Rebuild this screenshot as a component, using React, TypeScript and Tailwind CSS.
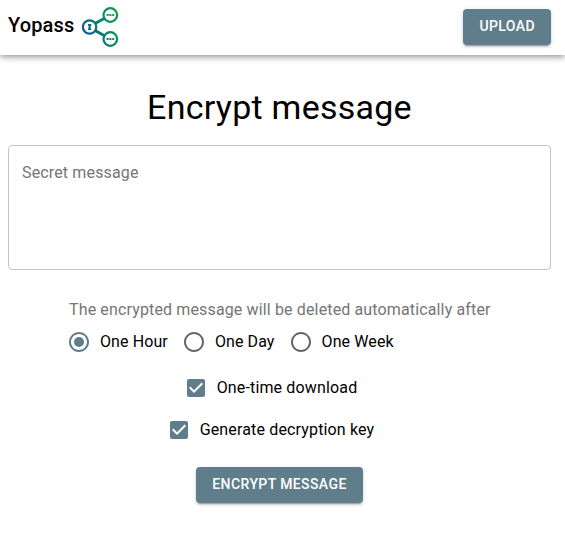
import React from 'react';

function Logo() {
  return (
    <svg className="mb-0.5" width="38" height="42" viewBox="0 0 38 42" fill="none">
      <defs>
        <linearGradient id="brand" x1="0" y1="30" x2="34" y2="12" gradientUnits="userSpaceOnUse">
          <stop stopColor="#0b4c9c" />
          <stop offset="0.5" stopColor="#087c70" />
          <stop offset="1" stopColor="#0a9a4c" />
        </linearGradient>
      </defs>
      <g stroke="url(#brand)" strokeWidth="2.2">
        <path d="M14 18.6 23.2 13.4M14 25.4 23.2 30.6" strokeWidth="2.9" />
        <circle cx="8.6" cy="22" r="6.7" />
        <circle cx="29.3" cy="10" r="6.8" />
        <circle cx="29.3" cy="34" r="6.8" />
      </g>
      <g fill="url(#brand)">
        <path d="M7 19h3.2v1.8H9.7v2.6h.5V25H7v-1.6h.6v-2.6H7z" />
        <path d="M25.6 9h2v2h-2zM28.4 9h2v2h-2zM31.2 9h2v2h-2z" />
        <path d="M25.6 33h2v2h-2zM28.4 33h2v2h-2zM31.2 33h2v2h-2z" />
      </g>
    </svg>
  );
}

function Radio({ label, checked = false }: { label: string; checked?: boolean }) {
  return (
    <label className="mr-3.5 flex items-center">
      <svg className={checked ? 'text-[#607d8b]' : 'text-[#666666]'} width="24" height="24" viewBox="0 0 24 24" fill="currentColor">
        <path d="M12 2C6.48 2 2 6.48 2 12s4.48 10 10 10 10-4.48 10-10S17.52 2 12 2zm0 18c-4.42 0-8-3.58-8-8s3.58-8 8-8 8 3.58 8 8-3.58 8-8 8z" />
        {checked && <circle cx="12" cy="12" r="5" />}
      </svg>
      <span className="ml-[9px] tracking-[0.1px]">{label}</span>
    </label>
  );
}

function Checkbox({ label }: { label: string }) {
  return (
    <label className="flex h-[42px] items-center justify-center pr-[18px]">
      <svg width="24" height="24" viewBox="0 0 24 24" fill="#607d8b">
        <path d="M19 3H5c-1.11 0-2 .9-2 2v14c0 1.1.89 2 2 2h14c1.11 0 2-.9 2-2V5c0-1.1-.89-2-2-2zm-9 14l-5-5 1.41-1.41L10 14.17l7.59-7.59L19 8l-9 9z" />
      </svg>
      <span className="ml-[9px]">{label}</span>
    </label>
  );
}

const buttonClass =
  'h-9 rounded bg-[#607d8b] px-4 pb-0.5 text-sm font-medium leading-[24.5px] tracking-[0.4px] text-white uppercase shadow-[0_3px_1px_-2px_rgba(0,0,0,0.2),0_2px_2px_0_rgba(0,0,0,0.14),0_1px_5px_0_rgba(0,0,0,0.12)]';

export default function App() {
  return (
    <div className="h-[536px] overflow-hidden bg-white font-[Roboto,sans-serif] text-base leading-6 tracking-[0.15px] text-black">
      <header className="flex h-[55px] items-center justify-between pr-3.5 pb-px pl-2 shadow-[0_2px_4px_-1px_rgba(0,0,0,0.2),0_4px_5px_0_rgba(0,0,0,0.14),0_1px_10px_0_rgba(0,0,0,0.12)]">
        <div className="flex items-center">
          <span className="mr-[7px] pb-[5px] text-xl font-medium">Yopass</span>
          <Logo />
        </div>
        <button className={buttonClass}>Upload</button>
      </header>
      <main className="w-[559px] px-2 pt-[31px]">
        <h1 className="text-center text-[34px] leading-[42px] tracking-[0.25px]">Encrypt message</h1>
        <div className="mt-[17px] h-[125px] rounded border border-[#c4c4c4] px-[13px] pt-[15px] text-[#757575]">Secret message</div>
        <section className="mt-7 pl-[61px]">
          <p className="tracking-[0.14px] text-[#757575]">The encrypted message will be deleted automatically after</p>
          <div className="-ml-[2px] mt-2 flex">
            <Radio label="One Hour" checked />
            <Radio label="One Day" />
            <Radio label="One Week" />
          </div>
        </section>
        <div className="mt-[13px]">
          <Checkbox label="One-time download" />
          <Checkbox label="Generate decryption key" />
        </div>
        <div className="mt-4 flex justify-center">
          <button className={buttonClass}>Encrypt message</button>
        </div>
      </main>
    </div>
  );
}
